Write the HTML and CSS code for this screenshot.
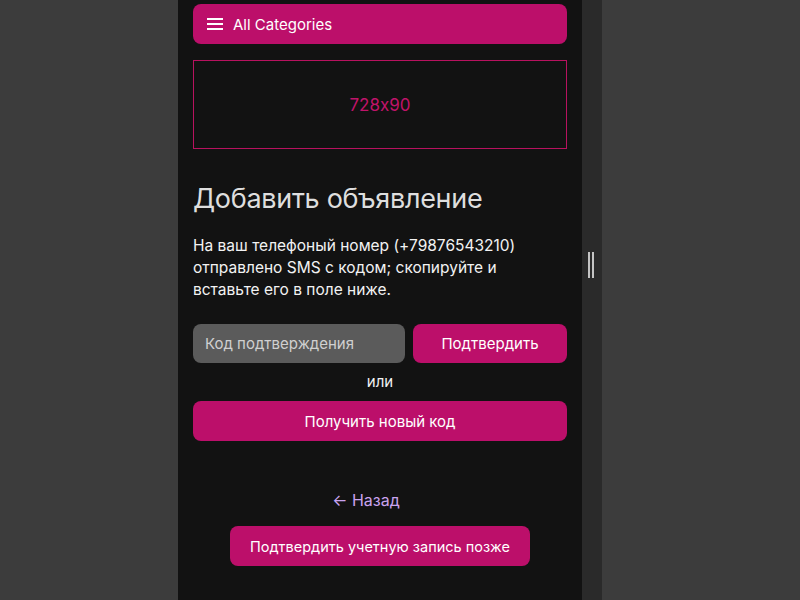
FILE: index.html
```html
<!DOCTYPE html>
<html lang="ru">
<head>
    <meta charset="UTF-8">
    <meta name="viewport" content="width=device-width, initial-scale=1.0">
    <title>Добавить объявление</title>
    <link rel="stylesheet" href="styles.css">
</head>
<body>

    <div class="frame">
        <div class="page">
            <button class="categories" type="button">
                <svg width="16" height="14" viewBox="0 0 16 14">
                    <rect x="0" y="1" width="16" height="2" fill="#fff"/>
                    <rect x="0" y="6" width="16" height="2" fill="#fff"/>
                    <rect x="0" y="11" width="16" height="2" fill="#fff"/>
                </svg>
                All Categories
            </button>

            <div class="ad-slot">728x90</div>

            <h1>Добавить объявление</h1>
            <p class="info">На ваш телефоный номер (+79876543210) отправлено SMS с кодом; скопируйте и вставьте его в поле ниже.</p>

            <form class="code-form">
                <input type="text" placeholder="Код подтверждения">
                <button type="submit" class="btn">Подтвердить</button>
            </form>

            <div class="or">или</div>
            <button type="button" class="btn btn-wide">Получить новый код</button>

            <div class="bottom">
                <a href="#" class="back">← Назад</a>
                <button type="button" class="btn btn-later">Подтвердить учетную запись позже</button>
            </div>
        </div>

        <div class="resizer">
            <span class="grip"></span>
        </div>
    </div>

</body>
</html>
```

FILE: styles.css
```css
/* Reset */
* {
    margin: 0;
    padding: 0;
    box-sizing: border-box;
    font-family: Inter, "Noto Sans", sans-serif;
    font-feature-settings: "calt" 0;
}

body {
    background-color: #3c3c3c;
    height: 600px;
    overflow: hidden;
}

.frame {
    display: flex;
    margin-left: 178px;
    width: 424px;
    height: 600px;
}

.page {
    background-color: #121212;
    width: 404px;
    padding: 4px 15px 0 15px;
    display: flex;
    flex-direction: column;
}

.resizer {
    width: 20px;
    background-color: #2a2a2a;
    display: flex;
    align-items: center;
    justify-content: center;
}

.grip {
    width: 6px;
    height: 26px;
    border-left: 2px solid #c4c4c4;
    border-right: 2px solid #c4c4c4;
    margin-top: -70px;
    margin-left: -2px;
}

.categories {
    display: flex;
    align-items: center;
    gap: 10px;
    height: 40px;
    padding: 0 14px;
    background-color: #bc0f6a;
    color: #fff;
    border: none;
    border-radius: 8px;
    font-size: 15px;
    text-align: left;
}

.ad-slot {
    margin-top: 16px;
    height: 89px;
    border: 1px solid #b8125f;
    display: flex;
    align-items: center;
    justify-content: center;
    color: #c0146a;
    font-size: 17px;
}

h1 {
    margin-top: 34px;
    font-size: 27px;
    font-weight: 400;
    letter-spacing: -0.3px;
    color: #dedede;
    line-height: 32px;
}

.info {
    margin-top: 20px;
    font-size: 15.5px;
    line-height: 22px;
    color: #f2f2f2;
}

.code-form {
    display: flex;
    gap: 8px;
    margin-top: 23px;
}

.code-form input {
    width: 212px;
    height: 39px;
    padding: 0 12px;
    background-color: #5b5b5b;
    border: none;
    border-radius: 8px;
    font-size: 15px;
    color: #fff;
}

.code-form input::placeholder {
    color: #d0d0d0;
}

.btn {
    height: 40px;
    background-color: #bc0f6a;
    color: #fff;
    border: none;
    border-radius: 8px;
    font-size: 15px;
    white-space: nowrap;
    cursor: pointer;
}

.code-form .btn {
    flex: 1;
    height: 39px;
}

.or {
    text-align: center;
    color: #f2f2f2;
    font-size: 15px;
    line-height: 38px;
}

.btn-wide {
    width: 100%;
}

.bottom {
    display: flex;
    flex-direction: column;
    align-items: center;
    margin-top: 48px;
}

.back {
    color: #c9a3ef;
    text-decoration: none;
    font-size: 16px;
    line-height: 22px;
    margin-left: -28px;
}

.btn-later {
    margin-top: 15px;
    padding: 0 20px;
    font-size: 14.5px;
}
```
